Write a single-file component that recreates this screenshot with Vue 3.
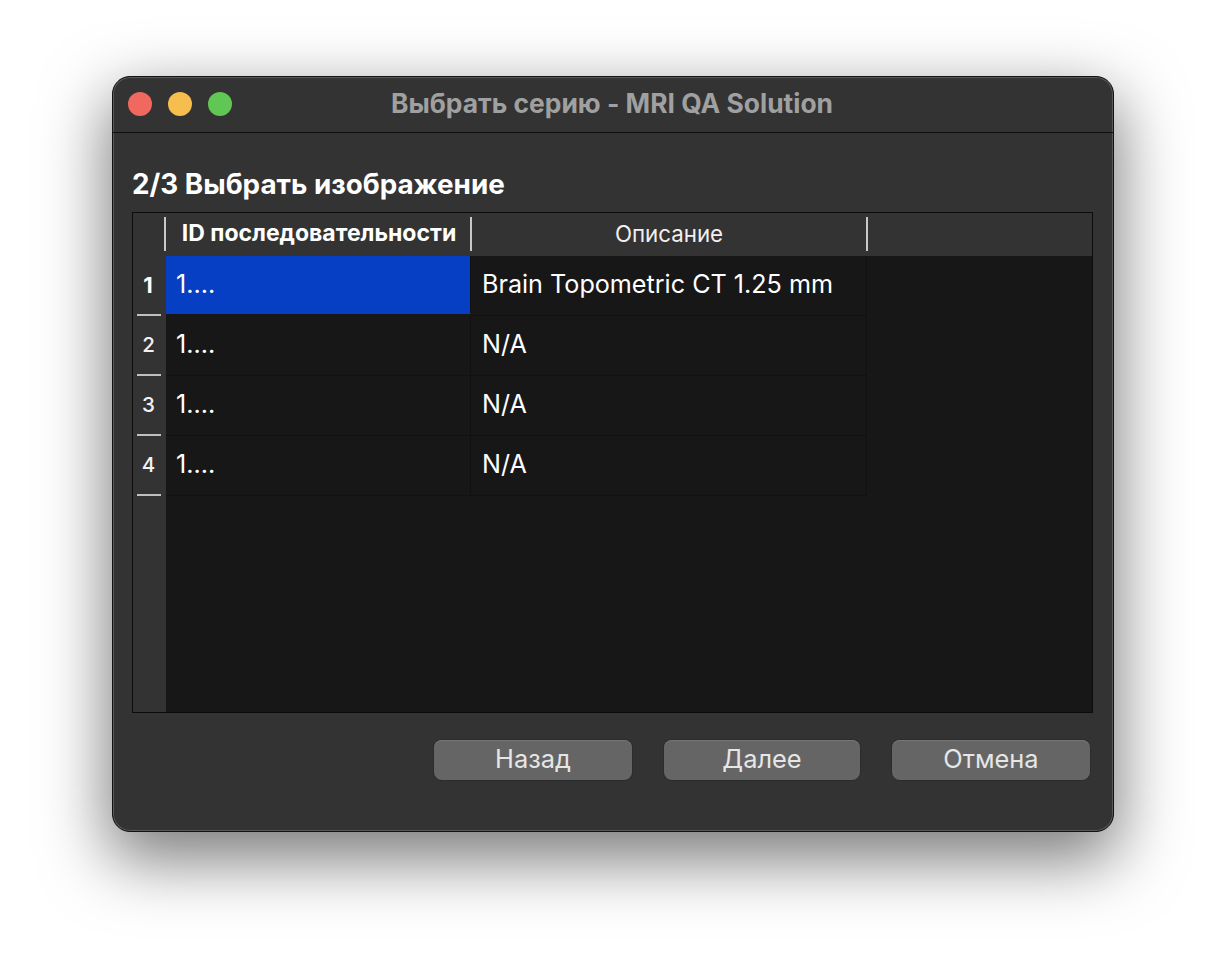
<script setup>
const rows = [
  { id: 1, seq: "1....", desc: "Brain Topometric CT 1.25 mm" },
  { id: 2, seq: "1....", desc: "N/A" },
  { id: 3, seq: "1....", desc: "N/A" },
  { id: 4, seq: "1....", desc: "N/A" },
];
const buttons = ["Назад", "Далее", "Отмена"];
</script>

<template>
  <div class="stage">
    <div class="window">
      <div class="titlebar">
        <div class="lights">
          <span class="light red"></span>
          <span class="light yellow"></span>
          <span class="light green"></span>
        </div>
        <div class="title">Выбрать серию - MRI QA Solution</div>
      </div>

      <div class="body">
        <h1 class="heading">2/3 Выбрать изображение</h1>

        <div class="table">
          <div class="head">
            <div class="corner"></div>
            <div class="hcell first">ID последовательности</div>
            <div class="hcell second">Описание</div>
            <div class="hcell rest"></div>
          </div>
          <div class="content">
            <div class="gutter">
              <div v-for="row in rows" :key="row.id" class="rownum" :class="{ current: row.id === 1 }">
                {{ row.id }}
              </div>
            </div>
            <div class="rows">
              <div v-for="row in rows" :key="row.id" class="row">
                <div class="cell seq" :class="{ selected: row.id === 1 }">{{ row.seq }}</div>
                <div class="cell desc">{{ row.desc }}</div>
              </div>
            </div>
          </div>
        </div>

        <div class="actions">
          <button v-for="b in buttons" :key="b" class="btn" type="button">{{ b }}</button>
        </div>
      </div>
    </div>
  </div>
</template>

<style>
html,
body {
  background: #fff;
}
</style>

<style scoped>
.stage {
  width: 1226px;
  height: 980px;
  padding: 76px 0 0 112px;
  box-sizing: border-box;
  overflow: hidden;
  font-family: Inter, "Liberation Sans", sans-serif;
}

.window {
  width: 1002px;
  height: 756px;
  box-sizing: border-box;
  background: #333333;
  border: 1px solid #111;
  border-radius: 18px;
  box-shadow: inset 0 0 0 1px #5a5a5a, 0 24px 66px 4px rgba(0, 0, 0, 0.52);
  display: flex;
  flex-direction: column;
  overflow: hidden;
}

.titlebar {
  height: 55px;
  flex: none;
  display: flex;
  align-items: center;
  justify-content: center;
  position: relative;
  border-bottom: 1px solid #0f0f0f;
}

.lights {
  position: absolute;
  left: 15px;
  top: 15px;
  display: flex;
  gap: 16px;
}

.light {
  width: 24px;
  height: 24px;
  border-radius: 50%;
}
.red {
  background: #f1695e;
}
.yellow {
  background: #f6bd4f;
}
.green {
  background: #60c754;
}

.title {
  font-size: 26.4px;
  font-weight: 700;
  color: #a0a0a0;
  margin-left: -2px;
  padding-bottom: 3px;
}

.body {
  flex: 1;
  padding: 0 20px 0 19px;
  display: flex;
  flex-direction: column;
}

.heading {
  margin: 36px 0 0;
  height: 43px;
  font-size: 27.8px;
  line-height: 30px;
  font-weight: 700;
  color: #fff;
}

.table {
  width: 961px;
  height: 501px;
  flex: none;
  box-sizing: border-box;
  border: 1px solid #0c0c0c;
  background: #171717;
  display: flex;
  flex-direction: column;
}

.head {
  height: 43px;
  flex: none;
  display: flex;
  background: #333333;
}

.corner {
  width: 33px;
  flex: none;
}

.hcell {
  box-sizing: border-box;
  height: 34px;
  margin-top: 4px;
  padding-bottom: 2px;
  display: flex;
  align-items: center;
  justify-content: center;
  font-size: 22.3px;
  color: #f0f0f0;
  border-left: 2px solid #c8c8c8;
}

.first {
  width: 306px;
  flex: none;
  margin-left: -2px;
  padding-left: 2px;
  font-size: 23px;
  font-weight: 700;
  color: #fff;
}
.second {
  width: 396px;
  flex: none;
}
.rest {
  flex: 1;
}

.content {
  flex: 1;
  display: flex;
}

.gutter {
  width: 33px;
  flex: none;
  background: #333333;
}

.rownum {
  position: relative;
  height: 60px;
  box-sizing: border-box;
  display: flex;
  align-items: center;
  justify-content: center;
  padding: 0 2px 3px 0;
  font-size: 20.5px;
  font-weight: 500;
  color: #f2f2f2;
}
.rownum.current {
  font-size: 22px;
  font-weight: 700;
  color: #fff;
  padding-right: 3px;
}
.rownum::after {
  content: "";
  position: absolute;
  left: 4px;
  right: 5px;
  bottom: 0;
  height: 2px;
  background: #c0c0c0;
}

.rows {
  width: 701px;
}

.row {
  display: flex;
  height: 60px;
}

.cell {
  box-sizing: border-box;
  display: flex;
  align-items: center;
  padding-bottom: 4px;
  font-size: 25.15px;
  color: #fff;
  border-bottom: 1px solid #111;
  border-right: 1px solid #111;
}

.seq {
  width: 305px;
  padding-left: 10px;
}
.seq.selected {
  background: #063ec4;
  background-clip: padding-box;
  border-bottom-color: #063ec4;
  height: 58px;
  padding-bottom: 2px;
}
.desc {
  width: 396px;
  padding-left: 11px;
}

.actions {
  display: flex;
  margin-top: 27px;
  padding-left: 302px;
}

.btn {
  width: 198px;
  height: 40px;
  flex: none;
  box-sizing: border-box;
  margin-right: 32px;
  border: none;
  border-radius: 8px;
  background: #656565;
  box-shadow: inset 0 1px 0 #767676, 0 0 0 1px #2c2c2c;
  color: #e6e6e6;
  font-family: inherit;
  font-size: 25.4px;
  padding: 0 0 4px;
}
.btn:nth-child(2) {
  width: 196px;
}
</style>
